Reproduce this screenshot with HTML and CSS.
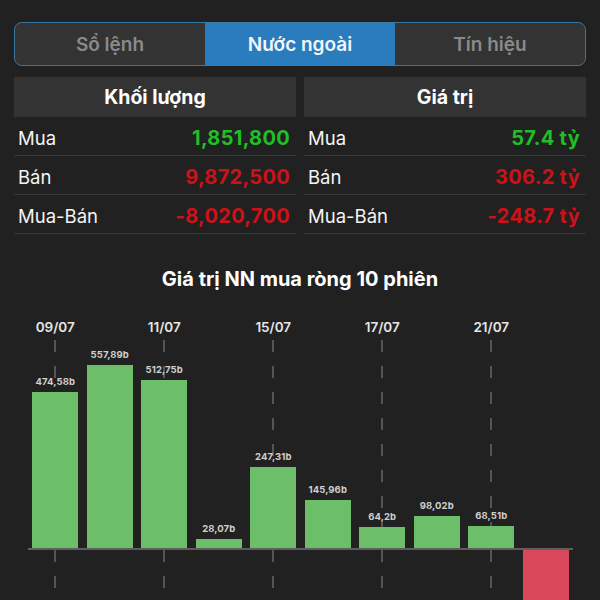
FILE: index.html
```html
<!DOCTYPE html>
<html lang="vi">
<head>
    <meta charset="UTF-8">
    <meta name="viewport" content="width=device-width, initial-scale=1.0">
    <title>Nước ngoài</title>
    <link rel="stylesheet" href="styles.css">
</head>
<body>
    <!-- Tabs -->
    <div class="tabs">
        <div class="tab">Sổ lệnh</div>
        <div class="tab active">Nước ngoài</div>
        <div class="tab">Tín hiệu</div>
    </div>

    <!-- Bảng khối lượng / giá trị -->
    <div class="stats">
        <div class="panel">
            <div class="panel-head">Khối lượng</div>
            <div class="row"><span class="label">Mua</span><span class="value up">1,851,800</span></div>
            <div class="row"><span class="label">Bán</span><span class="value down">9,872,500</span></div>
            <div class="row"><span class="label">Mua-Bán</span><span class="value down">-8,020,700</span></div>
        </div>
        <div class="panel">
            <div class="panel-head">Giá trị</div>
            <div class="row"><span class="label">Mua</span><span class="value up">57.4 tỷ</span></div>
            <div class="row"><span class="label">Bán</span><span class="value down">306.2 tỷ</span></div>
            <div class="row"><span class="label">Mua-Bán</span><span class="value down">-248.7 tỷ</span></div>
        </div>
    </div>

    <div class="chart-title">Giá trị NN mua ròng 10 phiên</div>

    <div class="chart" id="chart"></div>

    <script>
        const sessions = [
            { date: "09/07", value: 474.58 },
            { date: "", value: 557.89 },
            { date: "11/07", value: 512.75 },
            { date: "", value: 28.07 },
            { date: "15/07", value: 247.31 },
            { date: "", value: 145.96 },
            { date: "17/07", value: 64.2 },
            { date: "", value: 98.02 },
            { date: "21/07", value: 68.51 },
            { date: "", value: -248.7 },
        ];
        const scale = 0.328; // px cho mỗi tỷ

        const chart = document.getElementById("chart");
        sessions.forEach(s => {
            const col = document.createElement("div");
            col.className = "col" + (s.date ? " tick" : "");

            const date = document.createElement("div");
            date.className = "date";
            date.innerText = s.date;

            const pos = document.createElement("div");
            pos.className = "pos";
            const neg = document.createElement("div");
            neg.className = "neg";

            const bar = document.createElement("div");
            bar.className = "bar" + (s.value < 0 ? " minus" : "");
            bar.style.height = Math.round(Math.abs(s.value) * scale) + "px";

            if (s.value >= 0) {
                const label = document.createElement("div");
                label.className = "bar-label";
                label.innerText = String(s.value).replace(".", ",") + "b";
                pos.appendChild(label);
                pos.appendChild(bar);
            } else {
                // nhãn của cột âm nằm ngoài khung nhìn
                neg.appendChild(bar);
            }

            col.appendChild(date);
            col.appendChild(pos);
            col.appendChild(neg);
            chart.appendChild(col);
        });
    </script>
</body>
</html>
```

FILE: styles.css
```css
/* Nền tối, kiểu iOS */
html, body {
    margin: 0;
    height: 100%;
    overflow: hidden;
}

body {
    background: #212121;
    color: #fff;
    font-family: Inter, "Noto Sans", sans-serif;
    padding: 22px 14px 0;
    box-sizing: border-box;
}

/* Tabs */
.tabs {
    display: flex;
    height: 44px;
    border: 1.5px solid #3b77a3;
    border-radius: 8px;
    overflow: hidden;
    box-sizing: border-box;
    background: #333;
}

.tab {
    flex: 1;
    display: flex;
    justify-content: center;
    align-items: center;
    font-size: 19px;
    font-weight: 600;
    color: #8a8a8a;
}

.tab.active {
    background: #2a7cbc;
    color: #f2f6fa;
}

/* Bảng số liệu */
.stats {
    display: grid;
    grid-template-columns: 1fr 1fr;
    gap: 8px;
    margin-top: 11px;
}

.panel-head {
    height: 40px;
    background: #333;
    display: flex;
    justify-content: center;
    align-items: center;
    font-size: 19.5px;
    font-weight: 700;
}

.row {
    height: 38px;
    border-bottom: 1px solid #383838;
    display: flex;
    justify-content: space-between;
    align-items: center;
    padding: 3px 6px 0 4px;
    box-sizing: border-box;
    height: 39px;
}

.label {
    font-size: 18.5px;
    color: #f4f4f4;
}

.value {
    font-size: 20px;
    font-weight: 700;
    letter-spacing: 0.3px;
}

.up {
    color: #1fbf25;
}

.down {
    color: #cc1219;
}

/* Biểu đồ */
.chart-title {
    margin-top: 34px;
    text-align: center;
    font-size: 20px;
    font-weight: 700;
    line-height: 22px;
}

.chart {
    display: grid;
    grid-template-columns: repeat(10, 1fr);
    margin: 28px 13px 0 14px;
}

.col {
    display: flex;
    flex-direction: column;
    align-items: stretch;
}

.date {
    height: 18px;
    line-height: 18px;
    margin-bottom: 4px;
    text-align: center;
    font-size: 13.5px;
    font-weight: 600;
    color: #e6e6e6;
}

.pos, .neg {
    display: flex;
    flex-direction: column;
    align-items: center;
    padding: 0 4px;
}

.pos {
    height: 208px;
    justify-content: flex-end;
    border-bottom: 2px solid #5e5e5e;
}

.neg {
    height: 60px;
}

/* Đường gạch đứt dọc */
.tick .pos, .tick .neg {
    background-image: repeating-linear-gradient(to bottom, #555 0 12px, transparent 12px 26px);
    background-size: 2px 100%;
    background-position: top center;
    background-repeat: no-repeat;
}

.bar-label {
    font-size: 9.5px;
    font-weight: 700;
    color: #cfcfcf;
    margin-bottom: 5px;
    letter-spacing: 0.1px;
}

.bar {
    width: 46px;
    background: #6cbf68;
}

.bar.minus {
    background: #d8475a;
}
```
